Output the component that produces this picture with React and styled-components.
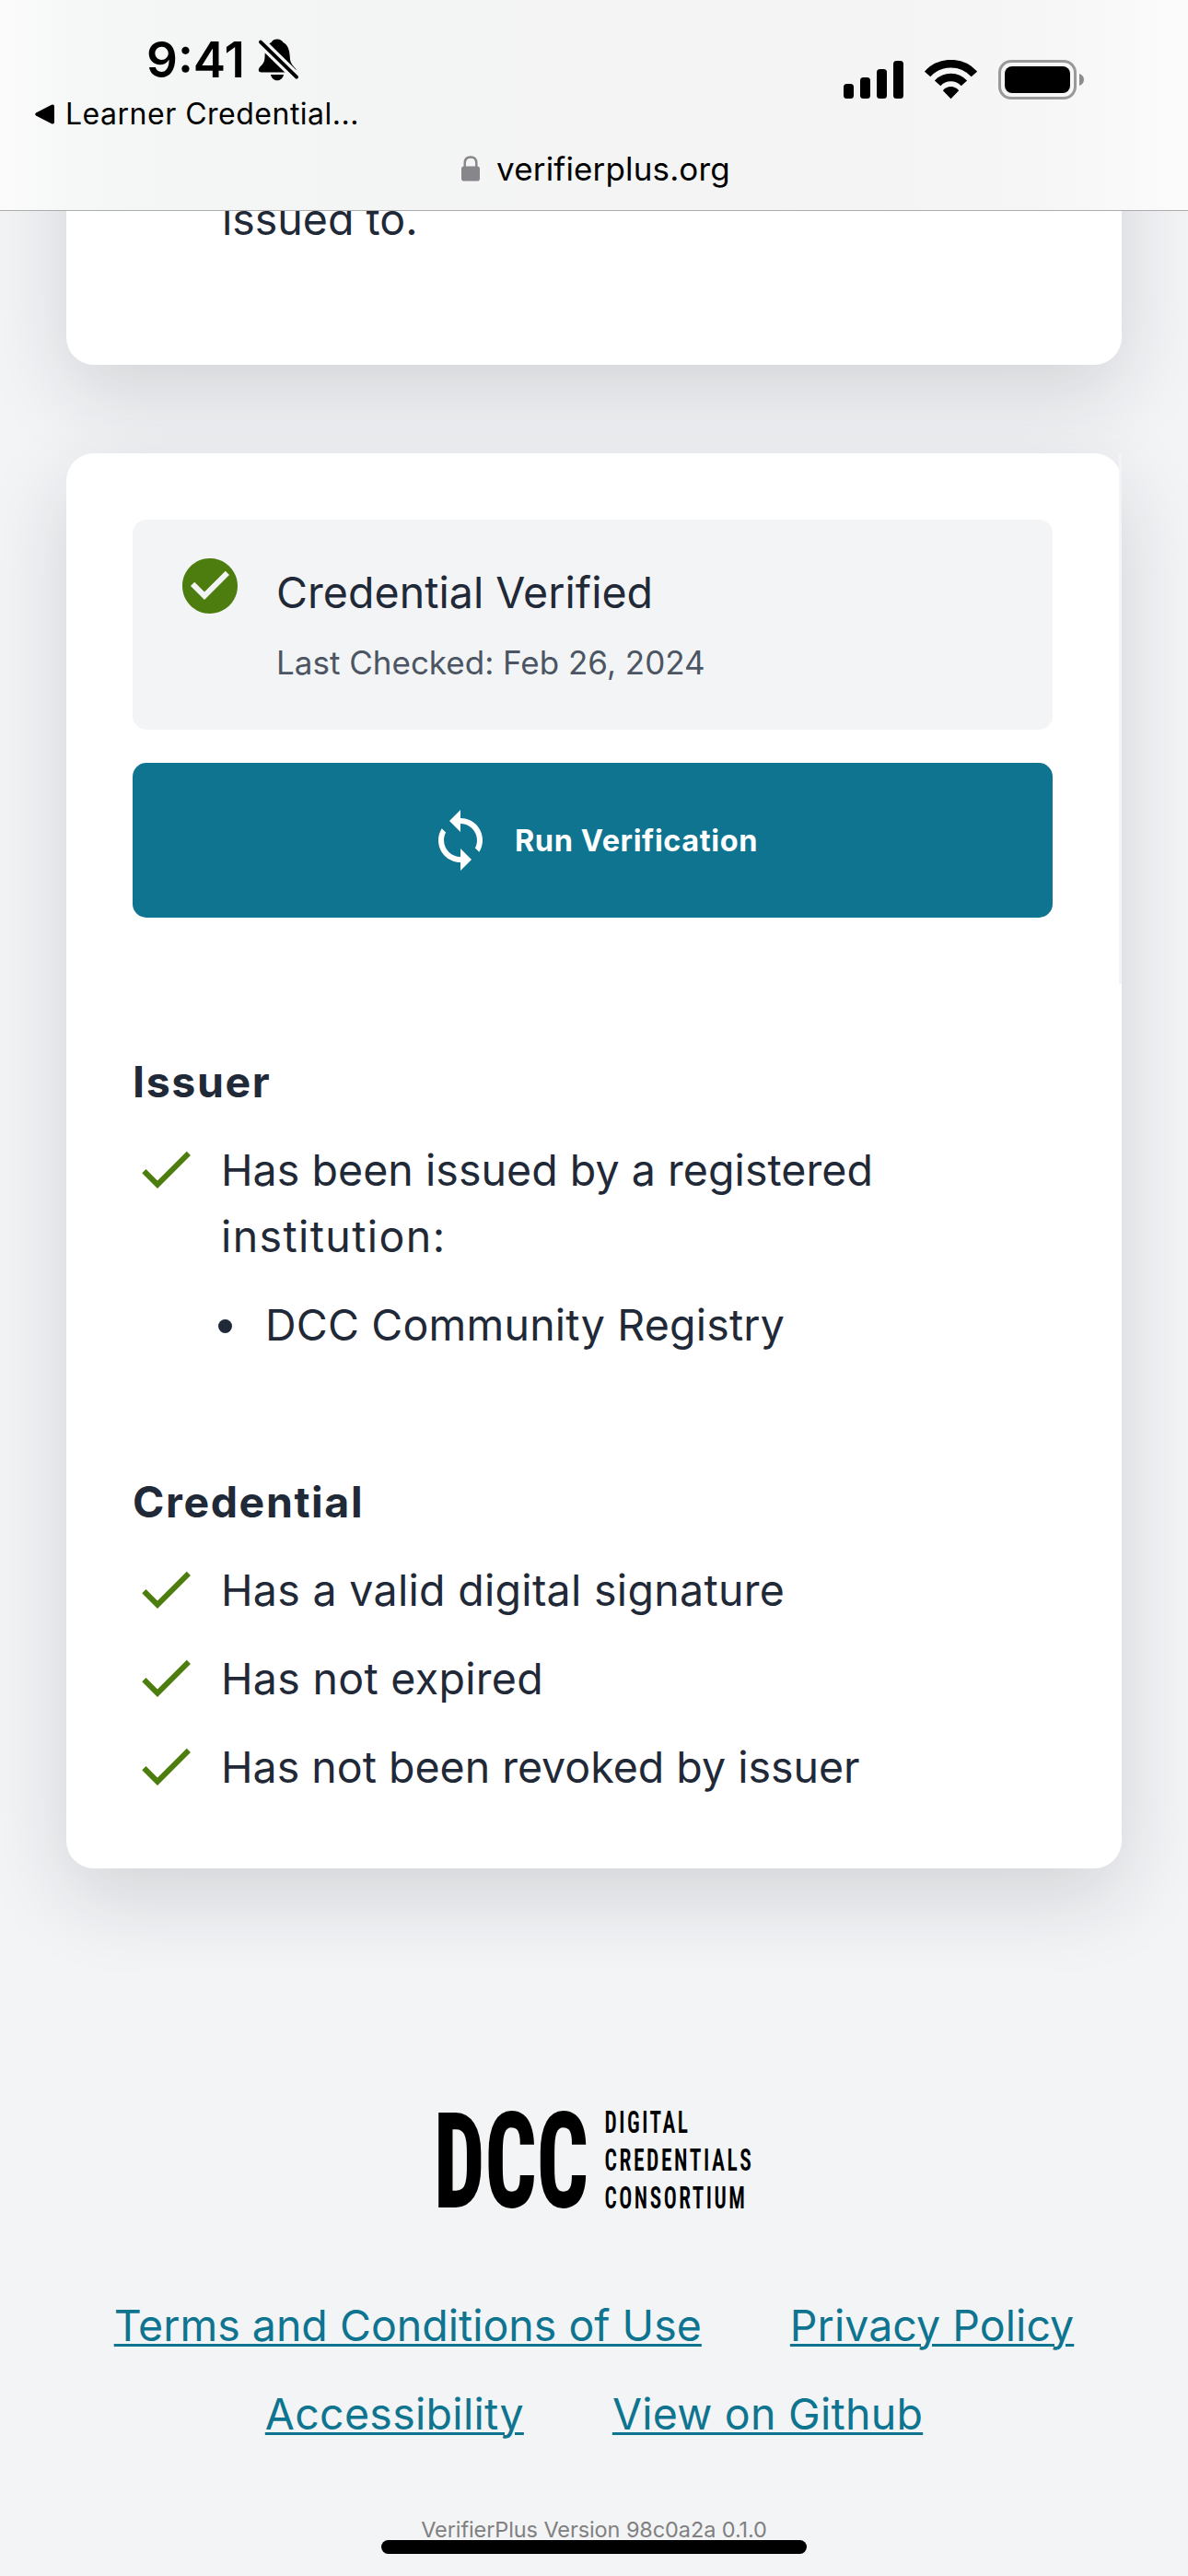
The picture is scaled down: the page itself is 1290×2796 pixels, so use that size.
import React from 'react';
import styled, { createGlobalStyle } from 'styled-components';

const GlobalStyle = createGlobalStyle`
  * { box-sizing: border-box; }
  body { margin: 0; background: #f3f4f6; }
  h2, p, ul { margin: 0; padding: 0; font: inherit; }
`;

const Screen = styled.div`
  position: relative;
  width: 1290px;
  height: 2796px;
  overflow: hidden;
  display: flex;
  flex-direction: column;
  background: #f3f4f6;
  color: #1f2937;
  font-family: Inter, "Liberation Sans", sans-serif;
  font-size: 46.5px;
  font-weight: 430;
  line-height: 72px;
`;

/* Browser chrome */
const TopBar = styled.header`
  flex: none;
  height: 229px;
  border-bottom: 1px solid #acacac;
  background: linear-gradient(90deg, #fbfbfb 0, #f6f7f7 80px, #f4f5f5 220px, #f4f4f4 900px, #f6f6f6 1120px, #fbfbfb 1290px);
  color: #000;
`;

const StatusRow = styled.div`
  display: flex;
  justify-content: space-between;
  align-items: flex-start;
  height: 104px;
  padding: 33px 113px 0 159px;
`;

const Clock = styled.div`
  display: flex;
  align-items: flex-start;
  gap: 13px;
  font-size: 53px;
  font-weight: 600;
  line-height: 64px;

  svg { margin-top: 7px; }
`;

const StatusIcons = styled.div`
  display: flex;
  align-items: flex-start;
  padding-top: 32px;
  gap: 23px;
`;

const BackLink = styled.div`
  display: flex;
  align-items: center;
  gap: 11px;
  height: 40px;
  padding-left: 38px;
  font-size: 32px;
  line-height: 40px;
  letter-spacing: 0.5px;
`;

const AddressBar = styled.div`
  display: flex;
  justify-content: center;
  align-items: center;
  gap: 18px;
  height: 44px;
  margin-top: 17px;
  padding-left: 4px;
  font-size: 35px;
  line-height: 44px;
  letter-spacing: 0.15px;
`;

/* Page */
const Page = styled.main`
  flex: 1;
  overflow: hidden;
  padding: 0 72px;
`;

const Card = styled.section`
  border-radius: 30px;
  background: #fff;
  box-shadow: 0 30px 90px rgba(17, 24, 39, 0.15);
`;

const PreviousCard = styled(Card)`
  margin-top: -240px;
  padding: 213px 72px 122px 169px;
`;

const VerificationCard = styled(Card)`
  margin-top: 96px;
`;

const Summary = styled.div`
  display: flex;
  flex-direction: column;
  gap: 36px;
  padding: 72px;
  border-right: 3px solid #f3f4f6;
`;

const StatusBox = styled.div`
  display: flex;
  gap: 36px;
  height: 228px;
  padding: 36px 48px;
  border-radius: 15px;
  background: #f3f4f6;
`;

const StatusText = styled.div`
  padding-top: 7px;
`;

const LastChecked = styled.p`
  margin-top: 16px;
  color: #4b5563;
  font-size: 35px;
  line-height: 48px;
`;

const RunButton = styled.button`
  display: flex;
  justify-content: center;
  align-items: center;
  gap: 23px;
  height: 168px;
  padding: 2px 0 0;
  border: 0;
  border-radius: 15px;
  background: #0e7490;
  color: #fff;
  font: 750 32.5px/48px Inter, "Liberation Sans", sans-serif;
  letter-spacing: 0.6px;

  svg { margin-top: -2px; }
`;

const Details = styled.div`
  display: flex;
  flex-direction: column;
  gap: 120px;
  padding: 70px 72px 74px;
`;

const Group = styled.div`
  display: flex;
  flex-direction: column;
  gap: 24px;
`;

const GroupTitle = styled.h2`
  font-weight: 750;
  letter-spacing: 1.6px;
`;

const CheckRow = styled.div`
  display: flex;
  gap: 24px;

  svg { flex: none; margin-top: -1px; }
`;

const Label = styled.span`
  display: block;
  letter-spacing: ${(p) => p.$spacing || 0}px;
`;

const BulletList = styled.ul`
  list-style: none;
  padding-left: 93px;
`;

const BulletItem = styled.li`
  display: flex;
  align-items: center;
  gap: 36px;
  letter-spacing: 0.2px;

  &::before {
    content: '';
    width: 15px;
    height: 15px;
    margin-top: 2px;
    border-radius: 50%;
    background: #1f2937;
  }
`;

const Footer = styled.footer`
  display: flex;
  flex-direction: column;
  align-items: center;
  margin: 256px -72px 0;
`;

const Links = styled.nav`
  display: flex;
  flex-direction: column;
  align-items: center;
  gap: 24px;
  margin-top: 84px;
`;

const LinkRow = styled.div`
  display: flex;
  gap: 96px;
`;

const FooterLink = styled.a`
  color: #0e7490;
  letter-spacing: ${(p) => p.$spacing || 0}px;
  text-decoration: underline;
  text-decoration-thickness: 3px;
  text-underline-offset: 3px;
`;

const Version = styled.p`
  margin-top: 72px;
  color: #808080;
  font-size: 23.5px;
  font-weight: 400;
  line-height: 36px;
  letter-spacing: -0.1px;
`;

const HomeIndicator = styled.div`
  position: absolute;
  left: 414px;
  bottom: 24px;
  width: 462px;
  height: 15px;
  border-radius: 8px;
  background: #000;
`;

const BellOff = () => (
  <svg width="46" height="50" viewBox="0 0 46 50">
    <path d="M22 2.5c3.5 0 5.5 2 6.5 3.5C34 9 35.5 15 35.8 22c.2 6 2.2 8 6.2 12.5C43.8 37 42 38.500 39 38.500H5c-3.500 0-4-3-2-5.500 4-4 5.500-6 5.600-13C8.800 13 11 8.500 15.500 6c1.500-2.500 3.500-3.500 6.500-3.500z" />
    <path d="M15 41h14c-.8 4-3.800 6.300-7 6.300s-6.200-2.300-7-6.300z" />
    <path d="M1 2.600 46 46.500" stroke="#f4f5f5" strokeWidth="10.500" />
    <path d="M4 5.600 43 43.600" stroke="#000" strokeWidth="4" strokeLinecap="round" />
  </svg>
);

const Signal = () => (
  <svg width="65" height="43" viewBox="0 0 65 43">
    <rect x="0" y="26" width="11" height="16" rx="3.500" />
    <rect x="18" y="19" width="11" height="23" rx="3.500" />
    <rect x="36" y="10" width="11" height="32" rx="3.500" />
    <rect x="54" y="1" width="11" height="41" rx="3.500" />
  </svg>
);

const Wifi = () => (
  <svg width="57" height="43" viewBox="0 0 57 43">
    <g fill="none" stroke="#000" strokeWidth="8.600">
      <path d="M3.100 15.500a34.100 34.100 0 0 1 50.800 0" />
      <path d="M14.100 25.400a19.300 19.300 0 0 1 28.800 0" />
    </g>
    <path d="M28.500 42.300 19.800 33.300a11 11 0 0 1 17.400 0z" />
  </svg>
);

const Battery = () => (
  <svg width="93" height="43" viewBox="0 0 93 43">
    <rect x="1.500" y="1.500" width="82" height="40" rx="12.500" fill="none" stroke="#999" strokeWidth="3" />
    <rect x="7" y="7" width="71" height="29" rx="8" />
    <path d="M88 15c3 1 5 3.500 5 6.500s-2 5.500-5 6.500z" fill="#8c8c8c" />
  </svg>
);

const BackTriangle = () => (
  <svg width="22" height="22" viewBox="0 0 22 22">
    <path d="M1 9.500 18 .8q3-1 3 2v16.400q0 3-3 2L1 12.500q-1.500-1.500 0-3z" />
  </svg>
);

const Lock = () => (
  <svg width="20" height="28" viewBox="0 0 20 28">
    <rect x="0" y="11.500" width="20" height="16" rx="2.800" fill="#86868b" />
    <path d="M3.700 13V8C3.700 3.500 6.500 1.500 10 1.500s6.300 2 6.300 6.500v5" fill="none" stroke="#86868b" strokeWidth="2.400" />
  </svg>
);

const Glyph = ({ d, color }) => (
  <svg width="72" height="72" viewBox="0 0 24 24" fill={color}>
    <path d={d} />
  </svg>
);

const CHECK = 'M9 16.170 4.830 12l-1.420 1.410L9 19 21 7l-1.410-1.410z';
const CHECK_CIRCLE = 'M12 2C6.480 2 2 6.480 2 12s4.480 10 10 10 10-4.480 10-10S17.520 2 12 2zm-2 15-5-5 1.410-1.410L10 14.170l7.590-7.590L19 8l-9 9z';
const SYNC = 'M12 4V1L8 5l4 4V6c3.310 0 6 2.690 6 6 0 1.010-.25 1.970-.7 2.800l1.460 1.460C19.540 15.030 20 13.570 20 12c0-4.420-3.580-8-8-8zm0 14c-3.310 0-6-2.690-6-6 0-1.010.25-1.970.7-2.800L5.240 7.740C4.460 8.970 4 10.430 4 12c0 4.420 3.580 8 8 8v3l4-4-4-4v3z';

const LogoText = styled.text`
  font-family: "Roboto Condensed", Roboto, sans-serif;
  font-size: ${(p) => p.$size}px;
  font-weight: ${(p) => p.$weight};
  letter-spacing: ${(p) => p.$spacing}px;
`;

const LogoLine = (props) => (
  <LogoText $size={32.5} $weight={600} $spacing={3.5} lengthAdjust="spacingAndGlyphs" {...props} />
);

const Logo = () => (
  <svg width="350" height="120" viewBox="0 0 350 120">
    <LogoText $size={145} $weight={800} $spacing={0} x="1" y="112" textLength="168" lengthAdjust="spacingAndGlyphs">DCC</LogoText>
    <LogoLine x="186.500" y="31" textLength="93">DIGITAL</LogoLine>
    <LogoLine x="186.500" y="72" textLength="162">CREDENTIALS</LogoLine>
    <LogoLine x="186.500" y="113" textLength="155">CONSORTIUM</LogoLine>
  </svg>
);

const Check = ({ children, spacing }) => (
  <CheckRow>
    <Glyph d={CHECK} color="#4d7c0f" />
    <Label $spacing={spacing}>{children}</Label>
  </CheckRow>
);

export default function App() {
  return (
    <Screen>
      <GlobalStyle />
      <TopBar>
        <StatusRow>
          <Clock>9:41<BellOff /></Clock>
          <StatusIcons><Signal /><Wifi /><Battery /></StatusIcons>
        </StatusRow>
        <BackLink><BackTriangle />Learner Credential...</BackLink>
        <AddressBar><Lock />verifierplus.org</AddressBar>
      </TopBar>
      <Page>
        <PreviousCard><Label>issued to.</Label></PreviousCard>
        <VerificationCard>
          <Summary>
            <StatusBox>
              <Glyph d={CHECK_CIRCLE} color="#4d7c0f" />
              <StatusText>
                <Label $spacing={0.05}>Credential Verified</Label>
                <LastChecked>Last Checked: Feb 26, 2024</LastChecked>
              </StatusText>
            </StatusBox>
            <RunButton><Glyph d={SYNC} color="#fff" />Run Verification</RunButton>
          </Summary>
          <Details>
            <Group>
              <GroupTitle>Issuer</GroupTitle>
              <Check spacing={0.05}>Has been issued by a registered<Label $spacing={1.4}>institution:</Label></Check>
              <BulletList><BulletItem>DCC Community Registry</BulletItem></BulletList>
            </Group>
            <Group>
              <GroupTitle>Credential</GroupTitle>
              <Check spacing={0.3}>Has a valid digital signature</Check>
              <Check spacing={0.3}>Has not expired</Check>
              <Check>Has not been revoked by issuer</Check>
            </Group>
          </Details>
        </VerificationCard>
        <Footer>
          <Logo />
          <Links>
            <LinkRow>
              <FooterLink>Terms and Conditions of Use</FooterLink>
              <FooterLink $spacing={0.05}>Privacy Policy</FooterLink>
            </LinkRow>
            <LinkRow>
              <FooterLink $spacing={0.3}>Accessibility</FooterLink>
              <FooterLink $spacing={0.25}>View on Github</FooterLink>
            </LinkRow>
          </Links>
          <Version>VerifierPlus Version 98c0a2a 0.1.0</Version>
        </Footer>
      </Page>
      <HomeIndicator />
    </Screen>
  );
}
